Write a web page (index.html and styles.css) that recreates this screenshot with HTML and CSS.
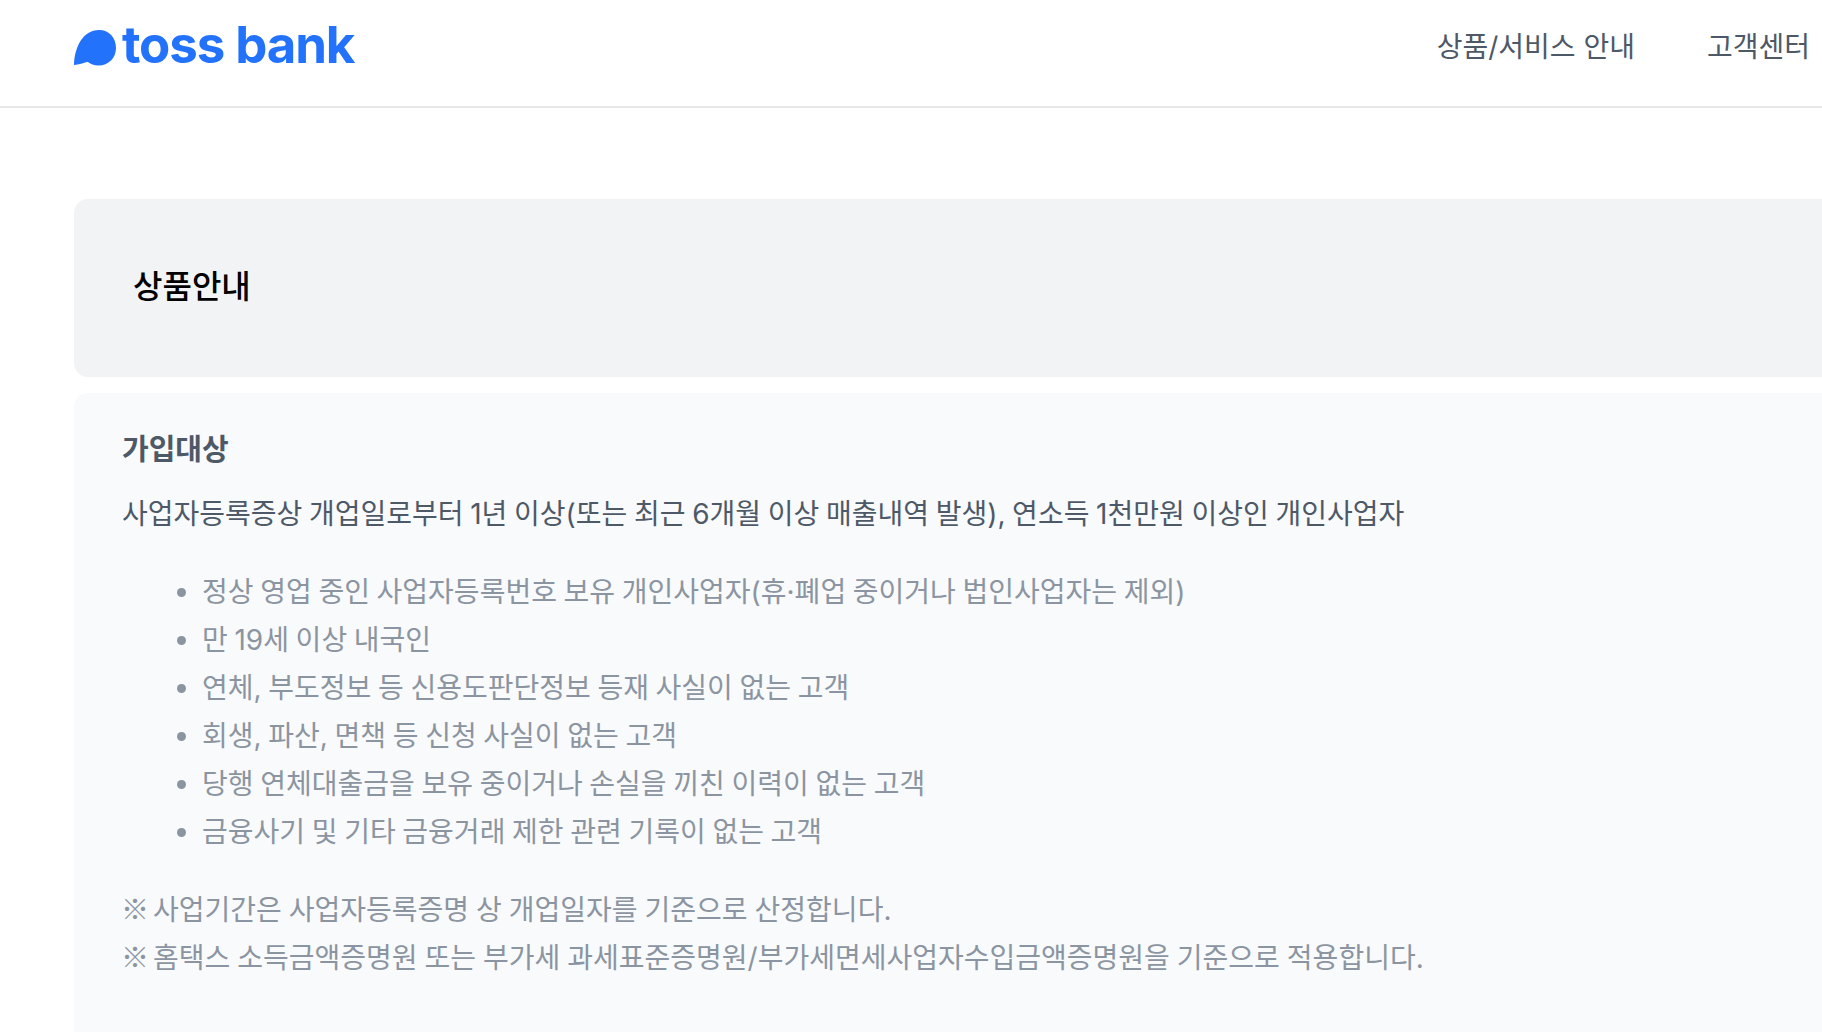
FILE: index.html
```html
<!DOCTYPE html>
<html lang="ko">
<head>
<meta charset="utf-8">
<title>토스뱅크 상품안내</title>
<link rel="stylesheet" href="styles.css">
</head>
<body>
<header class="top">
  <a class="logo">
    <svg class="logo-mark" viewBox="0 0 42 36" aria-hidden="true"><path d="M0 35C.5 17 9 0 25 0c10 0 17 7.500 17 18 0 10-7.500 17.500-17.500 17.500-4.500 0-8-1.500-11-3.800C9.500 33 5 34.500 0 35z"/></svg>
    <span class="logo-text">toss bank</span>
  </a>
  <nav class="nav"><a>상품/서비스 안내</a><a>고객센터</a></nav>
</header>
<main class="main">
  <section class="title-card"><h1>상품안내</h1></section>
  <section class="info-card">
    <h2>가입대상</h2>
    <p class="lead">사업자등록증상 개업일로부터 1년 이상(또는 최근 6개월 이상 매출내역 발생), 연소득 1천만원 이상인 개인사업자</p>
    <ul class="list">
      <li>정상 영업 중인 사업자등록번호 보유 개인사업자(휴·폐업 중이거나 법인사업자는 제외)</li>
      <li>만 19세 이상 내국인</li>
      <li>연체, 부도정보 등 신용도판단정보 등재 사실이 없는 고객</li>
      <li>회생, 파산, 면책 등 신청 사실이 없는 고객</li>
      <li>당행 연체대출금을 보유 중이거나 손실을 끼친 이력이 없는 고객</li>
      <li>금융사기 및 기타 금융거래 제한 관련 기록이 없는 고객</li>
    </ul>
    <p class="note"><span class="mark">※</span> 사업기간은 사업자등록증명 상 개업일자를 기준으로 산정합니다.</p>
    <p class="note"><span class="mark">※</span> 홈택스 소득금액증명원 또는 부가세 과세표준증명원/부가세면세사업자수입금액증명원을 기준으로 적용합니다.</p>
  </section>
</main>
</body>
</html>
```
FILE: styles.css
```css
html, body { margin: 0; height: 1032px; overflow: hidden; background: #fff; }
body { font-family: Inter, "Noto Sans CJK KR", sans-serif; width: 1900px; word-spacing: -1.2px; }
.top { height: 106px; border-bottom: 2px solid #e5e7e9; display: flex; align-items: center; padding: 0 12px 0 74px; width: 1736px; justify-content: space-between; }
.logo { display: flex; align-items: center; gap: 6px; color: #2272fb; margin-top: -16px; }
.logo-mark { width: 42px; height: 36px; fill: #2272fb; margin-top: 6px; }
.logo-text { font-family: Inter, sans-serif; font-weight: 700; font-size: 51px; line-height: 52px; letter-spacing: -1.1px; word-spacing: 0; }
.nav { display: flex; gap: 72px; font-size: 28px; color: #4e5968; margin-top: -16px; word-spacing: 0; }
.main { padding: 91px 0 0 74px; }
.title-card { height: 178px; background: #f2f3f5; border-radius: 14px 0 0 14px; display: flex; align-items: center; padding-left: 59px; }
.title-card h1 { margin: -9px 0 0; font-size: 32px; font-weight: 500; color: #000; }
.info-card { margin-top: 16px; background: #f9fafc; border-radius: 14px 0 0 0; padding: 33px 48px; height: 700px; }
.info-card h2 { margin: 0; font-size: 29px; line-height: 48px; font-weight: 600; color: #4e5968; }
.lead { margin: 16px 0 0; font-size: 28px; line-height: 48px; color: #4e5968; }
.list { margin: 30px 0 0; padding: 0 0 0 80px; font-size: 28px; line-height: 48px; color: #8b95a1; }
.note { margin: 0; font-size: 28px; line-height: 48px; color: #8b95a1; word-spacing: -.9px; }
.list + .note { margin-top: 30px; }
.mark { font-family: "Noto Sans CJK KR", sans-serif; line-height: 0; margin-right: -3px; margin-left: -1px; }
```
